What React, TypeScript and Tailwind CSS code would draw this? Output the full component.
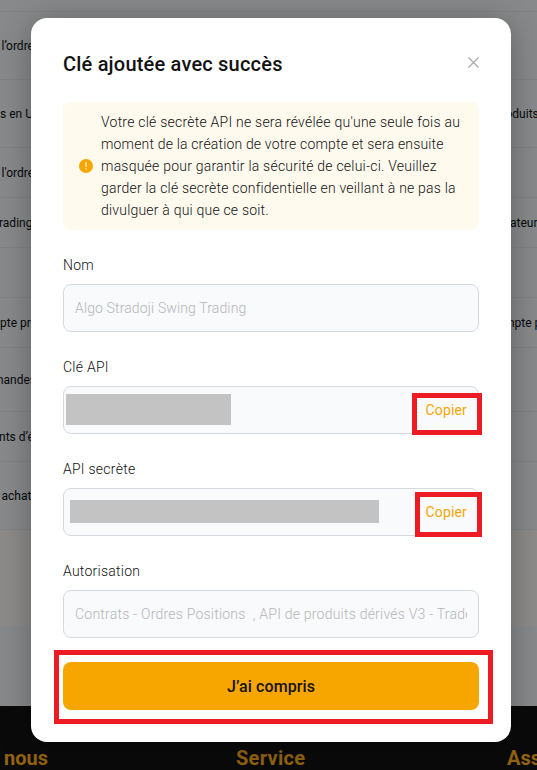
import React from "react";

const rows = [
  { h: "h-[68px]", left: "l’ordre", lx: "ml-[1.5px]", right: "", rx: "" },
  { h: "h-[68px]", left: "s en U", lx: "ml-0", right: "oduits", rx: "ml-[-1.5px]" },
  { h: "h-[50px]", left: "l'ordre", lx: "ml-[1.5px]", right: "", rx: "" },
  { h: "h-[50px]", left: "rading", lx: "ml-[-1px]", right: "ateur", rx: "ml-[3px]" },
  { h: "h-[50px]", left: "", lx: "", right: "", rx: "" },
  { h: "h-[50px]", left: "pte pr", lx: "ml-0", right: "mpte p", rx: "ml-[-3px]" },
  { h: "h-[64px]", left: "mandes", lx: "ml-[-7px]", right: "", rx: "" },
  { h: "h-[50px]", left: "nts d’é", lx: "ml-[-1px]", right: "", rx: "" },
  { h: "h-[68px]", left: "achat", lx: "ml-[1.5px]", right: "", rx: "" },
];

function Backdrop() {
  return (
    <div className="flex h-full flex-col bg-[#87898b]">
      <div className="h-3 shrink-0 border-b border-[#808284]" />
      {rows.map((r, i) => (
        <div
          key={i}
          className={`flex shrink-0 items-center justify-between border-b border-[#808284] text-[12px] whitespace-nowrap text-[#08090a] last:border-0 ${r.h}`}
        >
          <span className={r.lx}>{r.left}</span>
          <span className="w-[30px]">
            <span className={`inline-block ${r.rx}`}>{r.right}</span>
          </span>
        </div>
      ))}
      <div className="h-24 shrink-0 bg-[#8c8b8a]" />
      <div className="h-20 shrink-0 bg-[#87898b]" />
      <div className="grid h-16 shrink-0 grid-cols-[236px_271px_30px] overflow-hidden bg-[#0a0a0a] pt-[38px] text-[20px] leading-7 font-bold text-[#94640f]">
        <span className="pl-1">nous</span>
        <span className="tracking-[0.3px]">Service</span>
        <span>Ass</span>
      </div>
    </div>
  );
}

function Field({ label, children }: { label: string; children?: React.ReactNode }) {
  return (
    <div className="mt-6">
      <div className="mb-2 h-[22px] text-[14px] leading-[22px] font-light tracking-[0.25px] text-[#121214]">{label}</div>
      <div className="flex h-12 items-center rounded-lg border border-[#d4d9e0] bg-[#f9fafc] px-[11px] text-[14px] font-light text-[#b4b6ba]">
        {children}
      </div>
    </div>
  );
}

function Copy() {
  return <button className="ml-auto text-[14px] font-normal tracking-[0.15px] text-[#f7a600]">Copier</button>;
}

export default function App() {
  return (
    <div className="relative h-[770px] w-[537px] overflow-hidden font-['Roboto','Liberation_Sans',sans-serif]">
      <Backdrop />
      <div className="absolute top-[18px] left-[31px] h-[724px] w-[480px] rounded-2xl bg-white p-8 shadow-[0_4px_32px_rgba(0,0,0,0.3)]">
        <div className="flex h-7 items-center justify-between">
          <h1 className="text-[20px] leading-7 font-medium tracking-[0.2px] text-[#121214]">Clé ajoutée avec succès</h1>
          <svg className="mt-[-4px]" width="11" height="11" viewBox="0 0 11 11" fill="none" stroke="#a3a7ae" strokeWidth="1.15">
            <path d="M.5.5 10.5 10.5M10.5.5.5 10.5" />
          </svg>
        </div>

        <div className="mt-6 flex h-32 items-center rounded-lg bg-[#fffaee] pl-4">
          <svg width="14" height="14" viewBox="0 0 14 14">
            <circle cx="7" cy="7" r="7" fill="#f7a600" />
            <path d="M7 3.3v4.7M7 9.2v1.4" stroke="#fff3d6" strokeWidth="1.3" />
          </svg>
          <div className="ml-2 text-[14px] leading-[22px] font-light whitespace-nowrap text-[#121214]">
            <div className="tracking-[0.23px]">Votre clé secrète API ne sera révélée qu'une seule fois au</div>
            <div className="tracking-[0.17px]">moment de la création de votre compte et sera ensuite</div>
            <div className="tracking-[0.22px]">masquée pour garantir la sécurité de celui-ci. Veuillez</div>
            <div className="tracking-[0.21px]">garder la clé secrète confidentielle en veillant à ne pas la</div>
            <div className="tracking-[0.2px]">divulguer à qui que ce soit.</div>
          </div>
        </div>

        <Field label="Nom">
          <span className="tracking-[0.13px]">Algo Stradoji Swing Trading</span>
        </Field>
        <Field label="Clé API">
          <div className="mb-px ml-[-9px] h-[31px] w-[165px] bg-[#c3c3c3]" />
          <Copy />
        </Field>
        <Field label="API secrète">
          <div className="mb-px ml-[-5px] h-[23px] w-[309px] bg-[#c3c3c3]" />
          <Copy />
        </Field>
        <Field label="Autorisation">
          <span className="w-full overflow-hidden tracking-[0.22px] whitespace-pre">
            {"Contrats - Ordres Positions  , API de produits dérivés V3 - Trade"}
          </span>
        </Field>

        <button className="mt-6 h-12 w-full rounded-lg bg-[#f7a600] pt-0.5 text-[16px] font-medium tracking-[0.1px] text-[#121214]">
          J’ai compris
        </button>
      </div>

      <div className="absolute top-[393px] left-[412px] h-[42px] w-[70px] border-[5px] border-[#ed1c24]" />
      <div className="absolute top-[492px] left-[415px] h-[45px] w-[67px] border-[5px] border-[#ed1c24]" />
      <div className="absolute top-[650px] left-[54px] h-[74px] w-[439px] border-[5px] border-[#ed1c24]" />
    </div>
  );
}
